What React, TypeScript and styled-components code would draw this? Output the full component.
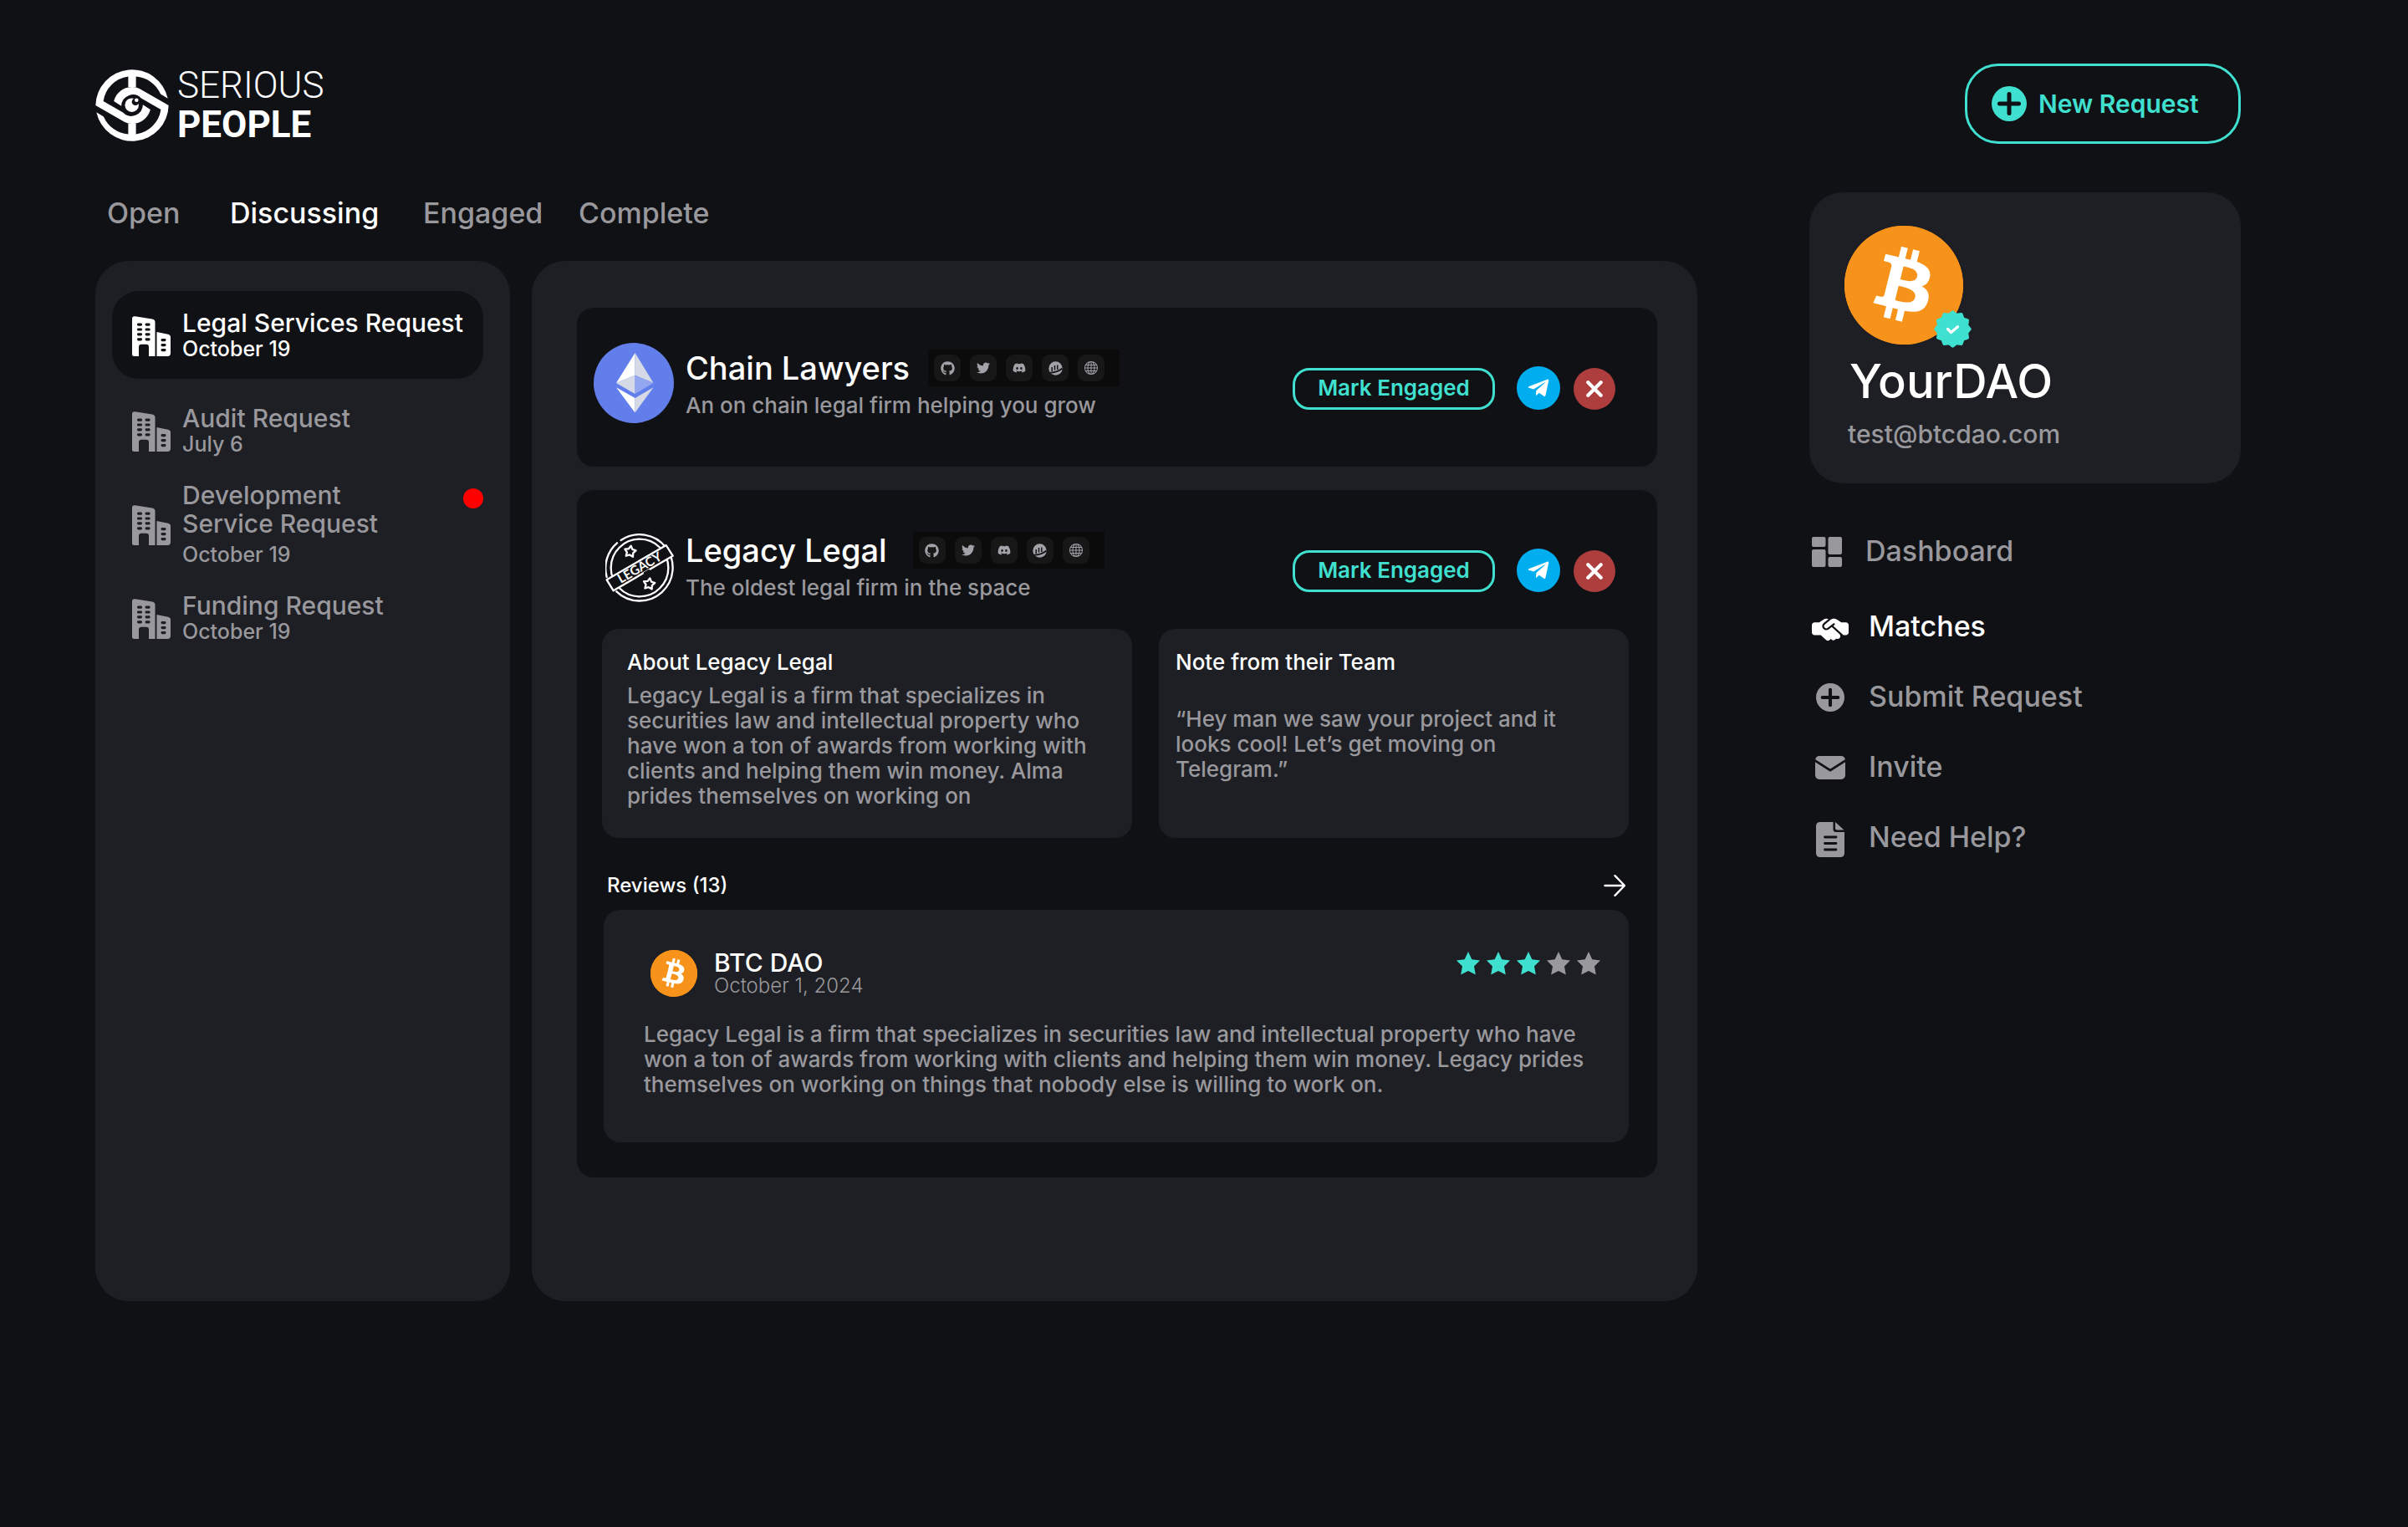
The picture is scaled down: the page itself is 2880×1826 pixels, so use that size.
import React from 'react';
import styled, { createGlobalStyle } from 'styled-components';
import { FaDiscord, FaGithub, FaTelegramPlane, FaTwitter } from 'react-icons/fa';
import { FaHandshakeSimple } from 'react-icons/fa6';
import { BsGlobe } from 'react-icons/bs';
import { SiBitcoin } from 'react-icons/si';

const color = {
  page: '#101115',
  panel: '#1e1f24',
  muted: '#99989d',
  white: '#ffffff',
  teal: '#40e0d0',
  telegram: '#00aeef',
  red: '#ae3e3d',
  bitcoin: '#f7931a',
};

const GlobalStyle = createGlobalStyle`
  *, *::before, *::after { box-sizing: border-box; }
  body {
    margin: 0;
    background: ${color.page};
    color: ${color.white};
    font-family: Inter, "Open Sans", sans-serif;
    font-weight: 500;
  }
  h1, h2, h3, p, ul { margin: 0; padding: 0; font-weight: inherit; }
  ul { list-style: none; }
  button { font: inherit; color: inherit; background: none; border: 0; padding: 0; cursor: pointer; }
  a { color: inherit; text-decoration: none; }
  svg { display: block; flex: none; }
`;

/* ---------- layout ---------- */

const Page = styled.div`
  min-height: 100vh;
  padding: 76px 200px 76px 114px;
`;

const Header = styled.header`
  display: flex;
  align-items: center;
  justify-content: space-between;
  height: 96px;
`;

const Columns = styled.div`
  display: grid;
  grid-template-columns: minmax(0, 1fr) 516px;
  column-gap: 134px;
  align-items: start;
  margin-top: 58px;
`;

const Panels = styled.div`
  display: grid;
  grid-template-columns: 496px minmax(0, 1fr);
  column-gap: 26px;
  margin-top: 37px;
`;

/* ---------- header ---------- */

const Logo = styled.a`
  display: flex;
  align-items: center;
  gap: 10px;
  padding-top: 4px;
`;

const LogoText = styled.span<{ $strong?: boolean }>`
  display: block;
  font-family: Roboto, sans-serif;
  font-size: 44px;
  line-height: 47px;
  font-weight: ${(p) => (p.$strong ? 700 : 300)};
`;

const NewRequestButton = styled.button`
  display: flex;
  align-items: center;
  gap: 14px;
  width: 330px;
  height: 96px;
  padding-left: 29px;
  border: 3px solid ${color.teal};
  border-radius: 40px;
  color: ${color.teal};
  font-size: 30px;
  font-weight: 600;
`;

/* ---------- tabs ---------- */

const Tabs = styled.nav`
  display: grid;
  grid-template-columns: 147px 231px 186px auto;
  justify-content: start;
  padding: 5px 0 0 14px;
`;

const Tab = styled.button<{ $active?: boolean }>`
  font-size: 34px;
  line-height: 40px;
  text-align: left;
  color: ${(p) => (p.$active ? color.white : color.muted)};
`;

/* ---------- request list ---------- */

const RequestPanel = styled.aside`
  padding: 36px 32px 36px 20px;
  border-radius: 40px;
  background: ${color.panel};
`;

const RequestList = styled.ul`
  display: flex;
  flex-direction: column;
  gap: 30px;
`;

const RequestItem = styled.button<{ $active?: boolean }>`
  display: flex;
  align-items: center;
  gap: 14px;
  width: 100%;
  padding: ${(p) => (p.$active ? '21px 0 22px 24px' : '0 0 0 24px')};
  border-radius: 32px;
  background: ${(p) => (p.$active ? color.page : 'none')};
  color: ${(p) => (p.$active ? color.white : color.muted)};
  text-align: left;

  svg { margin-top: 4px; }
`;

const RequestTitle = styled.span<{ $tall?: boolean }>`
  display: block;
  margin-bottom: ${(p) => (p.$tall ? 6 : 0)}px;
  font-size: 30px;
  line-height: 34px;
  white-space: pre-line;
`;

const RequestDate = styled.span`
  display: block;
  font-size: 25px;
  line-height: 28px;
`;

const UnreadDot = styled.span`
  align-self: flex-start;
  width: 24px;
  height: 24px;
  margin: 9px 0 0 auto;
  border-radius: 50%;
  background: #ff0000;
`;

/* ---------- firm cards ---------- */

const MatchPanel = styled.main`
  display: flex;
  flex-direction: column;
  gap: 28px;
  padding: 56px 48px 148px 54px;
  border-radius: 40px;
  background: ${color.panel};
`;

const FirmCard = styled.article<{ $open?: boolean }>`
  padding: ${(p) => (p.$open ? '50px 34px 42px 30px' : '42px 34px 52px 20px')};
  border-radius: 20px;
  background: ${color.page};
`;

const FirmHeader = styled.header<{ $indent: number }>`
  display: flex;
  align-items: flex-end;
  gap: 14px;
  padding: 0 16px 0 ${(p) => p.$indent}px;
`;

const FirmText = styled.div<{ $drop: number }>`
  display: flex;
  flex-direction: column;
  gap: 8px;
  padding-bottom: ${(p) => p.$drop}px;
`;

const FirmTitleRow = styled.div<{ $gap: number }>`
  display: flex;
  align-items: center;
  gap: ${(p) => p.$gap}px;
`;

const FirmName = styled.h2`
  font-size: 38px;
  line-height: 44px;
`;

const Tagline = styled.p`
  color: ${color.muted};
  font-size: 26px;
  line-height: 30px;
`;

const Socials = styled.div`
  display: flex;
  gap: 11px;
  padding: 6px 18px 6px 7px;
  background: #0b0b0b;
`;

const SocialLink = styled.a`
  display: grid;
  place-items: center;
  width: 32px;
  height: 32px;
  border-radius: 9px;
  background: #171717;
  color: #a3a2a8;
`;

const Actions = styled.div<{ $drop: number }>`
  display: flex;
  align-items: flex-end;
  margin-left: auto;
  padding-bottom: ${(p) => p.$drop}px;
`;

const EngageButton = styled.button`
  width: 242px;
  height: 50px;
  margin-right: 26px;
  padding-bottom: 4px;
  border: 3px solid ${color.teal};
  border-radius: 20px;
  color: ${color.teal};
  font-size: 26px;
  font-weight: 600;
`;

const RoundButton = styled.button<{ $size: number; $fill: string }>`
  display: grid;
  place-items: center;
  width: ${(p) => p.$size}px;
  height: ${(p) => p.$size}px;
  border-radius: 50%;
  background: ${(p) => p.$fill};

  & + & { margin-left: 16px; }
`;

const InfoGrid = styled.div`
  display: grid;
  grid-template-columns: 634fr 562fr;
  gap: 32px;
  margin-top: 32px;
`;

const InfoCard = styled.section<{ $inset: number; $gap: number }>`
  display: flex;
  flex-direction: column;
  gap: ${(p) => p.$gap}px;
  padding: 25px 30px 35px ${(p) => p.$inset}px;
  border-radius: 20px;
  background: ${color.panel};
`;

const InfoTitle = styled.h3`
  font-size: 26px;
  line-height: 30px;
`;

const Copy = styled.p`
  color: ${color.muted};
  font-size: 26px;
  line-height: 30px;
`;

const Reviews = styled.section`
  margin: 42px 0 0 2px;
`;

const ReviewsBar = styled.div`
  display: flex;
  align-items: center;
  justify-content: space-between;
  padding: 0 4px 14px 4px;
`;

const ReviewsTitle = styled.h3`
  font-size: 24px;
  line-height: 30px;
`;

const ReviewCard = styled.article`
  padding: 48px 34px 54px 48px;
  border-radius: 20px;
  background: ${color.panel};
`;

const ReviewHead = styled.div`
  display: flex;
  align-items: flex-start;
  gap: 20px;
  padding-left: 8px;
  margin-bottom: 29px;
`;

const Reviewer = styled.div`
  padding-top: 1px;
`;

const ReviewerName = styled.div`
  font-size: 30px;
  line-height: 28px;
`;

const ReviewDate = styled.div`
  color: ${color.muted};
  font-size: 24px;
  font-weight: 300;
  line-height: 28px;
`;

const Stars = styled.div`
  display: flex;
  gap: 8px;
  margin: 2px 0 0 auto;
`;

/* ---------- profile and menu ---------- */

const ProfileCard = styled.section`
  padding: 40px 42px;
  border-radius: 40px;
  background: ${color.panel};
`;

const ProfileAvatar = styled.div`
  position: relative;
  width: 142px;
`;

const Badge = styled.span`
  position: absolute;
  right: -10px;
  bottom: -4px;
`;

const ProfileName = styled.h1`
  margin-top: 14px;
  padding-left: 6px;
  font-size: 56px;
  line-height: 60px;
`;

const ProfileEmail = styled.p`
  margin-top: 14px;
  padding-left: 4px;
  color: ${color.muted};
  font-size: 30px;
  line-height: 38px;
`;

const Coin = styled.span<{ $size: number }>`
  display: grid;
  place-items: center;
  width: ${(p) => p.$size}px;
  height: ${(p) => p.$size}px;
  border-radius: 50%;
  background: radial-gradient(circle, #ffffff 62%, ${color.bitcoin} 64%);
  color: ${color.bitcoin};
`;

const Menu = styled.nav`
  display: flex;
  flex-direction: column;
  gap: 44px;
  padding: 61px 0 0 3px;
`;

const MenuLink = styled.a<{ $active?: boolean; $lead?: boolean }>`
  display: flex;
  align-items: center;
  gap: 24px;
  margin: ${(p) => (p.$lead ? '0 0 6px -4px' : '0')};
  font-size: 34px;
  line-height: 40px;
  color: ${(p) => (p.$active ? color.white : color.muted)};
`;

const MenuIcon = styled.span`
  display: grid;
  place-items: center;
  width: 44px;
  height: 40px;
  padding-top: 2px;
`;

/* ---------- drawings ---------- */

const LogoMark = () => {
  const half =
    'M285 150 A132 132 0 0 1 24 175 L50 191 A105 105 0 0 0 139 254 L139 216 L167 216 L167 254 A105 105 0 0 0 257 165 L186 124 A42 42 0 0 0 114 152 L87 135 A68 68 0 0 1 139 85 Q162 80 181 90 Z';
  return (
    <svg width="88" height="88" viewBox="20 17 266 266" fill={color.white} aria-hidden="true">
      <path d={half} />
      <path d={half} transform="rotate(180 153 150)" />
      <circle cx="152" cy="149" r="25" />
      <circle cx="165" cy="137" r="13" fill={color.page} />
      <circle cx="169" cy="131" r="7" />
    </svg>
  );
};

const PlusCircle = ({ size, bar }: { size: number; bar: number }) => (
  <svg width={size} height={size} viewBox="0 0 42 42" aria-hidden="true">
    <circle cx="21" cy="21" r="21" fill="currentColor" />
    <path d="M21 9.500V32.500M9.500 21H32.500" stroke={color.page} strokeWidth={bar} strokeLinecap="round" />
  </svg>
);

const Buildings = ({ cut }: { cut: string }) => (
  <svg width="46" height="48" viewBox="0 0 46 48" aria-hidden="true">
    <path
      fill="currentColor"
      d="M0 3Q0 0 3.500 .2L24 3.400Q27.500 4 27.500 7.500V48H20V37Q20 33.800 17 33.800H11Q8 33.800 8 37V48H2.500Q0 48 0 45.500ZM29.500 19 43 21.800Q46 22.400 46 25.500V44Q46 48 42.500 48H29.500Z"
    />
    <g fill={cut}>
      {[8.5, 14.4, 20.3, 26.2].map((y) => (
        <React.Fragment key={y}>
          <rect x="6" y={y} width="6" height="3.200" rx="1.400" />
          <rect x="15.600" y={y} width="6" height="3.200" rx="1.400" />
        </React.Fragment>
      ))}
      {[27, 33, 39].map((y) => (
        <rect key={y} x="34.500" y={y} width="6" height="3.200" rx="1.400" />
      ))}
    </g>
  </svg>
);

const Ethereum = () => (
  <svg width="96" height="96" viewBox="0 0 96 96" aria-hidden="true">
    <circle cx="48" cy="48" r="48" fill="#627eea" />
    <path d="M49.500 12 27 48 49.500 38.700Z" fill="#ffffff" />
    <path d="M49.500 12 71.500 48 49.500 38.700Z" fill="#d6dae6" />
    <path d="M27 48 49.500 38.700V61Z" fill="#d6dae6" />
    <path d="M71.500 48 49.500 38.700V61Z" fill="#93a6f0" />
    <path d="M27 53.300 49.500 66V83.500Z" fill="#ffffff" />
    <path d="M71.500 53.300 49.500 66V83.500Z" fill="#d6dae6" />
  </svg>
);

const outlineStar = (cx: number, cy: number, r: number) =>
  Array.from({ length: 10 }, (_, i) => {
    const a = ((i * 36 - 82) * Math.PI) / 180;
    const d = i % 2 ? r * 0.55 : r;
    return (cx + d * Math.cos(a)).toFixed(1) + ',' + (cy + d * Math.sin(a)).toFixed(1);
  }).join(' ');

const LegacyStamp = () => (
  <svg width="82" height="82" viewBox="72 84 246 246" fill="none" stroke="#ffffff" strokeWidth="7" strokeLinejoin="round" strokeLinecap="round" aria-hidden="true">
    <path d="M128 108A119 119 0 1 1 112 292" />
    <path d="M77 240A119 119 0 0 1 114 118" />
    <circle cx="195" cy="207" r="103" />
    <path d="M77 250 290 126 314 164 101 289Z" fill={color.page} />
    <path d="M214 226 228 218" stroke={color.page} strokeWidth="10" />
    <polygon points={outlineStar(161, 149, 21)} />
    <polygon points={outlineStar(229, 265, 21)} />
    <text x="196" y="222" transform="rotate(-30 196 208)" textAnchor="middle" fontFamily="Lato, sans-serif" fontSize="46" fontWeight="700" fill="#ffffff" stroke="none">
      LEGACY
    </text>
  </svg>
);

const Mirror = () => (
  <svg width="17" height="17" viewBox="0 0 17 17" aria-hidden="true">
    <circle cx="8.500" cy="8.500" r="8.200" fill="currentColor" />
    <path d="M4.200 7V12M7.500 5V10.500M10.800 4.500V10" fill="none" stroke="#171717" strokeWidth="1.500" />
    <path d="M1.500 13.600Q9 14 16.600 8.600" fill="none" stroke="#171717" strokeWidth="1.800" />
  </svg>
);

const Cross = () => (
  <svg width="20" height="20" viewBox="0 0 20 20" aria-hidden="true">
    <path d="M2.300 2.300 17.700 17.700M17.700 2.300 2.300 17.700" stroke="#ffffff" strokeWidth="4.200" strokeLinecap="round" />
  </svg>
);

const Arrow = () => (
  <svg width="26" height="26" viewBox="0 0 26 26" fill="none" stroke="#ffffff" strokeWidth="2.400" strokeLinecap="round" strokeLinejoin="round" aria-hidden="true">
    <path d="M1.500 13H25M13.500 1.200 25 13 13.500 24.800" />
  </svg>
);

const Star = ({ filled }: { filled: boolean }) => (
  <svg width="28" height="28" viewBox="0 0 28 28" aria-hidden="true">
    <path
      d="M14 0 18.300 9.300 28 10.600 21 17.600 22.800 27.500 14 22.900 5.200 27.500 7 17.600 0 10.600 9.700 9.300Z"
      fill={filled ? color.teal : color.muted}
    />
  </svg>
);

const badgePoints = Array.from({ length: 24 }, (_, i) => {
  const a = (i * 15 * Math.PI) / 180;
  const d = i % 2 ? 17.5 : 20.5;
  return (22.5 + d * Math.cos(a)).toFixed(2) + ',' + (22.5 + d * Math.sin(a)).toFixed(2);
}).join(' ');

const Verified = () => (
  <svg width="45" height="45" viewBox="0 0 45 45" aria-label="Verified" role="img">
    <polygon points={badgePoints} fill={color.teal} stroke={color.teal} strokeWidth="3.500" strokeLinejoin="round" />
    <path d="M16.500 22.500 20.500 26.500 28.500 19.800" fill="none" stroke="#ffffff" strokeWidth="3.200" strokeLinecap="round" strokeLinejoin="round" />
  </svg>
);

const DashboardIcon = () => (
  <svg width="36" height="36" viewBox="0 0 36 36" fill="currentColor" aria-hidden="true">
    <rect width="16.500" height="12" rx="2" />
    <rect y="15" width="16.500" height="21" rx="2" />
    <rect x="19.500" width="16.500" height="21" rx="2" />
    <rect x="19.500" y="24" width="16.500" height="12" rx="2" />
  </svg>
);

const MailIcon = () => (
  <svg width="36" height="28" viewBox="0 0 36 28" aria-hidden="true">
    <rect width="36" height="28" rx="5" fill="currentColor" />
    <path d="M-1 5 18 17.200 37 5" fill="none" stroke={color.page} strokeWidth="2.800" />
  </svg>
);

const DocIcon = () => (
  <svg width="34" height="42" viewBox="0 0 34 42" aria-hidden="true">
    <path d="M5 0H20.500V8.500Q20.500 12 24 12H34V37Q34 42 29 42H5Q0 42 0 37V5Q0 0 5 0Z" fill="currentColor" />
    <path d="M23 0 33.500 9.500H25Q23 9.500 23 7.500Z" fill="currentColor" />
    <path d="M10.500 18H24M10.500 25.500H24M10.500 33H24" stroke={color.page} strokeWidth="2.800" strokeLinecap="round" />
  </svg>
);

/* ---------- data ---------- */

const tabs = ['Open', 'Discussing', 'Engaged', 'Complete'];

const requests = [
  { title: 'Legal Services Request', date: 'October 19', active: true },
  { title: 'Audit Request', date: 'July 6' },
  { title: 'Development\nService Request', date: 'October 19', unread: true },
  { title: 'Funding Request', date: 'October 19' },
];

const menu = [
  { label: 'Dashboard', icon: <DashboardIcon /> },
  { label: 'Matches', icon: <FaHandshakeSimple size={44} />, active: true },
  { label: 'Submit Request', icon: <PlusCircle size={34} bar={5} /> },
  { label: 'Invite', icon: <MailIcon /> },
  { label: 'Need Help?', icon: <DocIcon /> },
];

const socials = [
  { name: 'GitHub', icon: <FaGithub size={17} /> },
  { name: 'Twitter', icon: <FaTwitter size={16} /> },
  { name: 'Discord', icon: <FaDiscord size={16} /> },
  { name: 'Mirror', icon: <Mirror /> },
  { name: 'Website', icon: <BsGlobe size={16} /> },
];

/* ---------- parts ---------- */

const BitcoinCoin = ({ size }: { size: number }) => (
  <Coin $size={size}>
    <SiBitcoin size={size} aria-hidden="true" />
  </Coin>
);

type FirmProps = {
  name: string;
  tagline: string;
  logo: React.ReactNode;
  indent: number;
  drop: number;
  socialGap: number;
};

const FirmTop = ({ name, tagline, logo, indent, drop, socialGap }: FirmProps) => (
  <FirmHeader $indent={indent}>
    {logo}
    <FirmText $drop={drop}>
      <FirmTitleRow $gap={socialGap}>
        <FirmName>{name}</FirmName>
        <Socials>
          {socials.map((s) => (
            <SocialLink key={s.name} href="#" aria-label={s.name}>
              {s.icon}
            </SocialLink>
          ))}
        </Socials>
      </FirmTitleRow>
      <Tagline>{tagline}</Tagline>
    </FirmText>
    <Actions $drop={drop + 10}>
      <EngageButton type="button">Mark Engaged</EngageButton>
      <RoundButton type="button" $size={52} $fill={color.telegram} aria-label="Message on Telegram">
        <FaTelegramPlane size={28} />
      </RoundButton>
      <RoundButton type="button" $size={50} $fill={color.red} aria-label="Dismiss">
        <Cross />
      </RoundButton>
    </Actions>
  </FirmHeader>
);

export default function App() {
  return (
    <>
      <GlobalStyle />
      <Page>
        <Header>
          <Logo href="#">
            <LogoMark />
            <span>
              <LogoText>SERIOUS</LogoText>
              <LogoText $strong>PEOPLE</LogoText>
            </span>
          </Logo>
          <NewRequestButton type="button">
            <PlusCircle size={42} bar={5} />
            New Request
          </NewRequestButton>
        </Header>

        <Columns>
          <div>
            <Tabs>
              {tabs.map((t) => (
                <Tab key={t} type="button" $active={t === 'Discussing'}>
                  {t}
                </Tab>
              ))}
            </Tabs>

            <Panels>
              <RequestPanel>
                <RequestList>
                  {requests.map((r) => (
                    <li key={r.title}>
                      <RequestItem type="button" $active={r.active}>
                        <Buildings cut={r.active ? color.page : color.panel} />
                        <span>
                          <RequestTitle $tall={r.unread}>{r.title}</RequestTitle>
                          <RequestDate>{r.date}</RequestDate>
                        </span>
                        {r.unread && <UnreadDot />}
                      </RequestItem>
                    </li>
                  ))}
                </RequestList>
              </RequestPanel>

              <MatchPanel>
                <FirmCard>
                  <FirmTop
                    name="Chain Lawyers"
                    tagline="An on chain legal firm helping you grow"
                    logo={<Ethereum />}
                    indent={0}
                    drop={6}
                    socialGap={22}
                  />
                </FirmCard>

                <FirmCard $open>
                  <FirmTop
                    name="Legacy Legal"
                    tagline="The oldest legal firm in the space"
                    logo={<LegacyStamp />}
                    indent={4}
                    drop={2}
                    socialGap={31}
                  />
                  <InfoGrid>
                    <InfoCard $inset={30} $gap={10}>
                      <InfoTitle>About Legacy Legal</InfoTitle>
                      <Copy>
                        Legacy Legal is a firm that specializes in securities law and intellectual property who have won a
                        ton of awards from working with clients and helping them win money. Alma prides themselves on
                        working on
                      </Copy>
                    </InfoCard>
                    <InfoCard $inset={20} $gap={38}>
                      <InfoTitle>Note from their Team</InfoTitle>
                      <Copy>“Hey man we saw your project and it looks cool! Let’s get moving on Telegram.”</Copy>
                    </InfoCard>
                  </InfoGrid>
                  <Reviews>
                    <ReviewsBar>
                      <ReviewsTitle>Reviews (13)</ReviewsTitle>
                      <button type="button" aria-label="All reviews">
                        <Arrow />
                      </button>
                    </ReviewsBar>
                    <ReviewCard>
                      <ReviewHead>
                        <BitcoinCoin size={56} />
                        <Reviewer>
                          <ReviewerName>BTC DAO</ReviewerName>
                          <ReviewDate>October 1, 2024</ReviewDate>
                        </Reviewer>
                        <Stars role="img" aria-label="3 out of 5 stars">
                          {[1, 2, 3, 4, 5].map((n) => (
                            <Star key={n} filled={n <= 3} />
                          ))}
                        </Stars>
                      </ReviewHead>
                      <Copy>
                        Legacy Legal is a firm that specializes in securities law and intellectual property who have won a
                        ton of awards from working with clients and helping them win money. Legacy prides themselves on
                        working on things that nobody else is willing to work on.
                      </Copy>
                    </ReviewCard>
                  </Reviews>
                </FirmCard>
              </MatchPanel>
            </Panels>
          </div>

          <aside>
            <ProfileCard>
              <ProfileAvatar>
                <BitcoinCoin size={142} />
                <Badge>
                  <Verified />
                </Badge>
              </ProfileAvatar>
              <ProfileName>YourDAO</ProfileName>
              <ProfileEmail>test@btcdao.com</ProfileEmail>
            </ProfileCard>
            <Menu>
              {menu.map((m, i) => (
                <MenuLink key={m.label} href="#" $active={m.active} $lead={i === 0}>
                  <MenuIcon>{m.icon}</MenuIcon>
                  {m.label}
                </MenuLink>
              ))}
            </Menu>
          </aside>
        </Columns>
      </Page>
    </>
  );
}
